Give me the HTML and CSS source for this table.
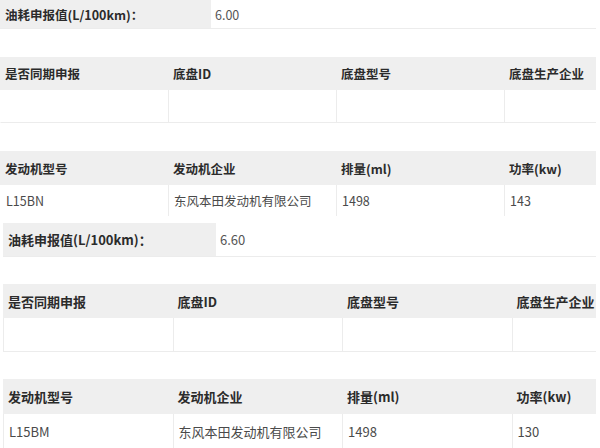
FILE: index.html
```html
<!DOCTYPE html>
<html lang="zh-CN">
<head>
<meta charset="utf-8">
<link rel="stylesheet" href="styles.css">
</head>
<body>
<div class="page">
  <section class="sheet sheet-a">
    <div class="kv">
      <div class="kv-label">油耗申报值(L/100km)：</div>
      <div class="kv-value">6.00</div>
    </div>
    <div class="tbl tbl-chassis">
      <div class="th">是否同期申报</div>
      <div class="th">底盘ID</div>
      <div class="th">底盘型号</div>
      <div class="th">底盘生产企业</div>
      <div class="td"></div>
      <div class="td"></div>
      <div class="td"></div>
      <div class="td"></div>
    </div>
    <div class="tbl tbl-engine">
      <div class="th">发动机型号</div>
      <div class="th">发动机企业</div>
      <div class="th">排量(ml)</div>
      <div class="th">功率(kw)</div>
      <div class="td">L15BN</div>
      <div class="td">东风本田发动机有限公司</div>
      <div class="td">1498</div>
      <div class="td">143</div>
    </div>
  </section>
  <section class="sheet sheet-b">
    <div class="kv">
      <div class="kv-label">油耗申报值(L/100km)：</div>
      <div class="kv-value">6.60</div>
    </div>
    <div class="tbl tbl-chassis">
      <div class="th">是否同期申报</div>
      <div class="th">底盘ID</div>
      <div class="th">底盘型号</div>
      <div class="th">底盘生产企业</div>
      <div class="td"></div>
      <div class="td"></div>
      <div class="td"></div>
      <div class="td"></div>
    </div>
    <div class="tbl tbl-engine">
      <div class="th">发动机型号</div>
      <div class="th">发动机企业</div>
      <div class="th">排量(ml)</div>
      <div class="th">功率(kw)</div>
      <div class="td">L15BM</div>
      <div class="td">东风本田发动机有限公司</div>
      <div class="td">1498</div>
      <div class="td">130</div>
    </div>
  </section>
</div>
</body>
</html>
```
FILE: styles.css
```css
html, body {
  margin: 0;
  padding: 0;
  background: #ffffff;
}
body {
  width: 600px;
  height: 448px;
  overflow: hidden;
  font-family: "Noto Sans CJK SC", "Noto Sans", sans-serif;
  color: #333333;
}
.page {
  display: flex;
  flex-direction: column;
}
.sheet {
  overflow: hidden;
  display: flex;
  flex-direction: column;
}
.sheet-a {
  width: 596px;
  font-size: 12.5px;
  --col: 168px;
  --label: 211px;
  --gap: 28px;
}
.sheet-b {
  width: 593px;
  margin-left: 3px;
  margin-top: 7px;
  font-size: 13px;
  --col: 169.5px;
  --label: 213px;
  --gap: 27px;
}
.kv {
  display: flex;
  border-bottom: 1px solid #ececec;
}
.sheet-a .kv { height: 28px; }
.sheet-b .kv { height: 33px; }
.kv-label {
  width: var(--label);
  flex: none;
  background: #efefef;
  font-weight: bold;
  color: #2b2b2b;
  padding-left: 5px;
  box-sizing: border-box;
  display: flex;
  align-items: center;
}
.kv-value {
  flex: 1;
  padding-left: 4px;
  color: #555555;
  display: flex;
  align-items: center;
}
.tbl {
  display: grid;
  grid-template-columns: var(--col) var(--col) var(--col) var(--col);
  margin-top: var(--gap);
  width: max-content;
}
.th {
  background: #efefef;
  font-weight: bold;
  color: #2b2b2b;
  padding-left: 5px;
  display: flex;
  align-items: center;
  white-space: nowrap;
}
.td {
  background: #ffffff;
  color: #4a4a4a;
  padding-left: 5px;
  display: flex;
  align-items: center;
  white-space: nowrap;
  border-left: 1px solid #ececec;
  border-bottom: 1px solid #ececec;
}
.sheet-a .td:nth-child(5) { border-left-color: transparent; }
.sheet-a .th { height: 33px; }
.sheet-a .tbl-chassis .td { height: 32px; }
.sheet-a .tbl-engine .th { height: 34px; }
.sheet-a .tbl-engine .td { height: 31px; border-bottom: none; }
.sheet-b .th { height: 34px; }
.sheet-b .tbl-chassis .td { height: 33px; }
.sheet-b .tbl-engine .th { height: 35px; }
.sheet-b .tbl-engine .td { height: 34px; border-bottom: none; }
```
